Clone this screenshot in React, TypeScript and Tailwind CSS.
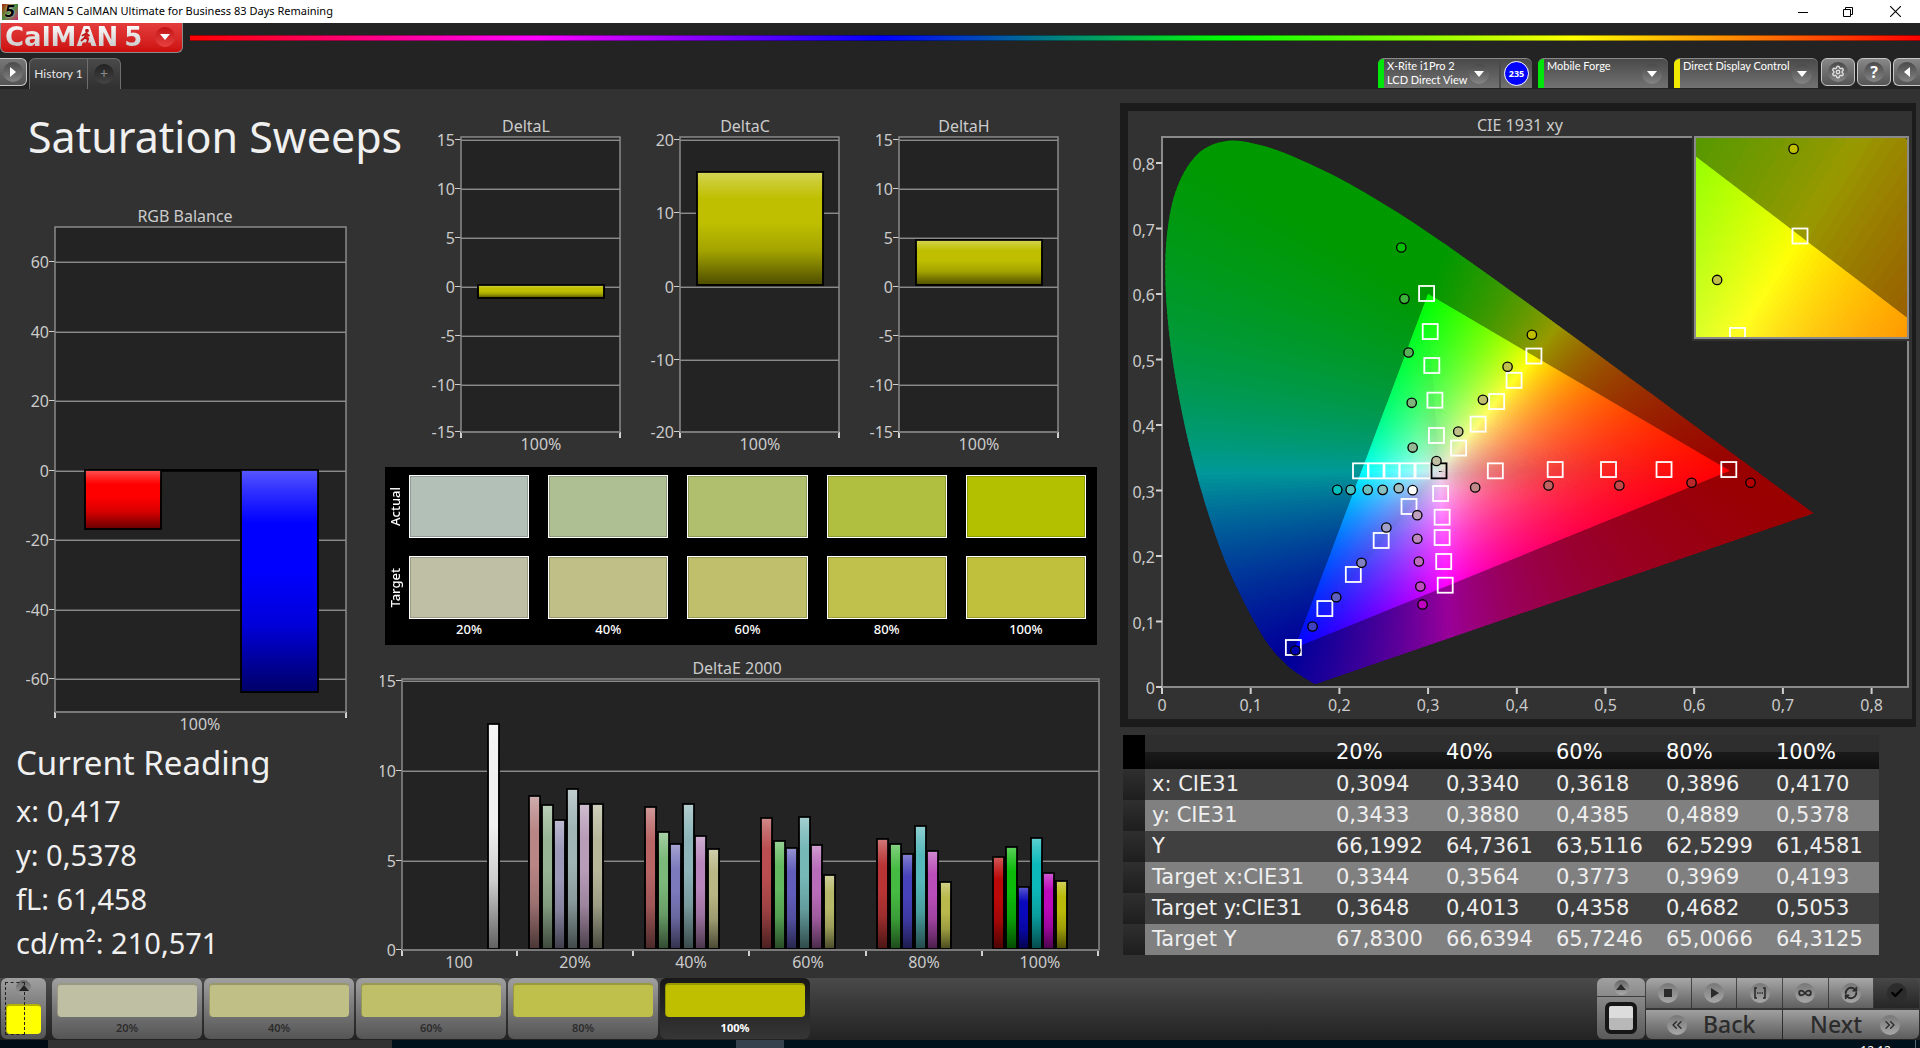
import type { ReactNode } from "react";
import { ChevronsLeft, ChevronsRight, Check, Infinity as Loop, RefreshCw, Settings } from "lucide-react";

type Point = [number, number];

type Bar = { x: number; w: number; top: number; bottom: number; color: string };
type Tick = { y: number; label: string };
type XLabel = { x: number; label: string };

type BarChartProps = {
  title: string;
  titleX: number;
  width: number;
  height: number;
  plot: { x: number; y: number; w: number; h: number };
  ticks: Tick[];
  xLabels: XLabel[];
  xTicks: number[];
  bars: Bar[];
};

function BarChart({ title, titleX, width, height, plot, ticks, xLabels, xTicks, bars }: BarChartProps) {
  const right = plot.x + plot.w;
  const bottom = plot.y + plot.h;

  return (
    <svg viewBox={`0 0 ${width} ${height}`} className="block w-full h-auto text-[16px]" fill="#cbcbcb">
      <defs>
        <linearGradient id="gloss" x1="0" y1="0" x2="0" y2="1">
          <stop offset="0" stopColor="#fff" stopOpacity="0.34" />
          <stop offset="0.1" stopColor="#fff" stopOpacity="0.18" />
          <stop offset="0.24" stopColor="#fff" stopOpacity="0" />
          <stop offset="0.45" stopColor="#000" stopOpacity="0" />
          <stop offset="0.7" stopColor="#000" stopOpacity="0.15" />
          <stop offset="1" stopColor="#000" stopOpacity="0.6" />
        </linearGradient>
      </defs>
      <text x={titleX} y={plot.y - 5} textAnchor="middle">
        {title}
      </text>
      <rect x={plot.x} y={plot.y} width={plot.w} height={plot.h} fill="#232323" />
      {ticks.map((t) => (
        <g key={t.label}>
          <rect x={plot.x} y={t.y - 1} width={plot.w} height="1" fill="#505050" />
          <rect x={plot.x} y={t.y} width={plot.w} height="1" fill="#8a8a8a" />
          <rect x={plot.x - 6} y={t.y - 1} width="6" height="1" fill="#d0d0d0" />
          <text x={plot.x - 6} y={t.y + 6} textAnchor="end">
            {t.label}
          </text>
        </g>
      ))}
      <rect x={plot.x} y={plot.y} width={plot.w} height={plot.h} fill="none" stroke="#8a8a8a" strokeWidth="1.5" />
      {bars.map((b) => (
        <g key={b.x} stroke="#000" strokeWidth="1.5">
          <rect x={b.x} y={b.top} width={b.w} height={b.bottom - b.top} fill={b.color} />
          <rect x={b.x} y={b.top} width={b.w} height={b.bottom - b.top} fill="url(#gloss)" />
        </g>
      ))}
      {xTicks.map((x) => (
        <rect key={x} x={x - 1} y={bottom} width="2" height="6" fill="#d0d0d0" />
      ))}
      <rect x={plot.x} y={bottom - 1} width={right - plot.x} height="2" fill="#7a7a7a" />
      {xLabels.map((l) => (
        <text key={l.label} x={l.x} y={bottom + 18} textAnchor="middle">
          {l.label}
        </text>
      ))}
    </svg>
  );
}

const deltaBar = (top: number, bottom: number): Bar[] => [{ x: 57, w: 126, top, bottom, color: "#bfbf00" }];
const fiveTicks: Tick[] = ["15", "10", "5", "0", "-5", "-10", "-15"].map((label, i) => ({ label, y: 31 + i * 49 - (i === 6 ? 2 : 0) }));
const tenTicks: Tick[] = ["20", "10", "0", "-10", "-20"].map((label, i) => ({ label, y: [31, 104, 178, 251, 323][i] }));

const deltaCharts = [
  { title: "DeltaL", ticks: fiveTicks, bars: deltaBar(176, 189) },
  { title: "DeltaC", ticks: tenTicks, bars: deltaBar(63, 176) },
  { title: "DeltaH", ticks: fiveTicks, bars: deltaBar(131, 176) },
];

const sweepGroups: { start: number; bars: [number, string][] }[] = [
  { start: 149, bars: [[143, "#b98585"], [152, "#97b594"], [167, "#9c99b9"], [136, "#a1b5b7"], [151, "#b89cb8"], [151, "#b6b79a"]] },
  { start: 265, bars: [[154, "#b96565"], [179, "#7bb879"], [191, "#7c79bc"], [151, "#8db5b9"], [183, "#b886bc"], [196, "#b8b684"]] },
  { start: 381, bars: [[165, "#b94d4f"], [188, "#62b960"], [195, "#605dbb"], [164, "#76b8b8"], [192, "#b96cb9"], [222, "#b8b86a"]] },
  { start: 497, bars: [[186, "#b93535"], [191, "#46bb42"], [201, "#4642bb"], [173, "#56b8ba"], [198, "#b94db9"], [229, "#b8b84c"]] },
  { start: 613, bars: [[204, "#bb0808"], [194, "#0cba0a"], [234, "#0a08bb"], [185, "#0cb8ba"], [220, "#ba08ba"], [228, "#b9b90a"]] },
];

const sweepBars: Bar[] = [
  { x: 108, w: 11, top: 71, bottom: 296, color: "#f0f0f0" },
  ...sweepGroups.flatMap((g) =>
    g.bars.map(([top, color], i) => ({ x: g.start + Math.round(i * 12.6), w: 11, top, bottom: 296, color })),
  ),
];

/* ---------- CIE 1931 diagram ---------- */

const RED: Point = [0.64, 0.33];
const GREEN: Point = [0.3, 0.6];
const BLUE: Point = [0.15, 0.06];
const WHITE: Point = [0.3127, 0.329];

const locus: Point[] = [
  [0.1741, 0.005], [0.1714, 0.0051], [0.1689, 0.0069], [0.1644, 0.0109], [0.1566, 0.0177], [0.144, 0.0297],
  [0.1241, 0.0578], [0.1096, 0.0868], [0.0913, 0.1327], [0.0687, 0.2007], [0.0454, 0.295], [0.0235, 0.4127],
  [0.0082, 0.5384], [0.0039, 0.6548], [0.0139, 0.7502], [0.0389, 0.812], [0.0743, 0.8338], [0.1142, 0.8262],
  [0.1547, 0.8059], [0.1929, 0.7816], [0.2296, 0.7543], [0.2658, 0.7243], [0.3016, 0.6923], [0.3373, 0.6589],
  [0.3731, 0.6245], [0.4087, 0.5896], [0.4441, 0.5547], [0.4788, 0.5202], [0.5125, 0.4866], [0.5448, 0.4544],
  [0.5752, 0.4242], [0.6029, 0.3965], [0.627, 0.3725], [0.6658, 0.334], [0.6915, 0.3083], [0.719, 0.2809],
  [0.7347, 0.2653],
];

// diagram units: xy * 1000 with y pointing up
const unit = ([x, y]: Point): Point => [x * 1000, -y * 1000];
const pts = (list: Point[]) => list.map((p) => unit(p).map((n) => n.toFixed(2)).join(",")).join(" ");
const mix = (a: Point, b: Point, t: number): Point => [a[0] + (b[0] - a[0]) * t, a[1] + (b[1] - a[1]) * t];

function xyColor([x, y]: Point, level = 1) {
  const X = x / y;
  const Z = (1 - x - y) / y;
  const rgb = [
    3.2406 * X - 1.5372 - 0.4986 * Z,
    -0.9689 * X + 1.8758 + 0.0415 * Z,
    0.0557 * X - 0.204 + 1.057 * Z,
  ].map((c) => Math.max(0, c));
  const max = Math.max(...rgb);
  return `rgb(${rgb.map((c) => Math.round((c / max) * 255 * level)).join(",")})`;
}

// smooth outline through the locus points
const locusPath = (() => {
  const p = locus.map(unit);
  let d = `M${p[0]}`;
  for (let i = 0; i < p.length - 1; i++) {
    const a = p[Math.max(0, i - 1)];
    const b = p[i];
    const c = p[i + 1];
    const e = p[Math.min(p.length - 1, i + 2)];
    d += `C${b[0] + (c[0] - a[0]) / 6},${b[1] + (c[1] - a[1]) / 6} ${c[0] - (e[0] - b[0]) / 6},${c[1] - (e[1] - b[1]) / 6} ${c[0]},${c[1]}`;
  }
  return d + "Z";
})();

const OUTER_STEPS = 120;
const outerFans = (
  [
    [RED, GREEN, BLUE],
    [BLUE, GREEN, RED],
    [GREEN, RED, BLUE],
  ] as Point[][]
).flatMap(([apex, from, to]) =>
  Array.from({ length: OUTER_STEPS }, (_, i) => {
    const a = mix(from, to, i / OUTER_STEPS);
    const b = mix(from, to, Math.min(1, (i + 1.5) / OUTER_STEPS));
    return {
      points: pts([a, b, mix(apex, b, 5), mix(apex, a, 5)]),
      fill: xyColor(mix(from, to, (i + 0.5) / OUTER_STEPS), 0.6),
    };
  }),
);

const corners = [
  { points: pts([GREEN, mix(RED, GREEN, 4), mix(BLUE, GREEN, 4)]), fill: "#009900" },
  { points: pts([BLUE, mix(RED, BLUE, 4), mix(GREEN, BLUE, 4)]), fill: "#000099" },
  { points: pts([RED, mix(GREEN, RED, 4), mix(BLUE, RED, 4)]), fill: "#990000" },
];

const INNER_STEPS = 220;
const STOPS = [0, 0.08, 0.16, 0.28, 0.42, 0.6, 0.8, 1];
const innerFan = (
  [
    [RED, GREEN],
    [GREEN, BLUE],
    [BLUE, RED],
  ] as Point[][]
).flatMap(([from, to], edge) =>
  Array.from({ length: INNER_STEPS }, (_, i) => {
    const a = mix(from, to, i / INNER_STEPS);
    const b = mix(from, to, (i + 2) / INNER_STEPS);
    const mid = mix(from, to, (i + 0.5) / INNER_STEPS);
    return { id: `ray-${edge}-${i}`, points: pts([WHITE, mix(WHITE, a, 1.1), mix(WHITE, b, 1.1)]), mid };
  }),
);

// The gradient vector is the normal of the triangle edge, so that every wedge
// reaches its full colour exactly on that edge.
function rayVector(edge: number): [Point, Point] {
  const [from, to] = [[RED, GREEN], [GREEN, BLUE], [BLUE, RED]][edge].map(unit);
  const w = unit(WHITE);
  const dx = to[0] - from[0];
  const dy = to[1] - from[1];
  const t = ((w[0] - from[0]) * dx + (w[1] - from[1]) * dy) / (dx * dx + dy * dy);
  return [w, [from[0] + dx * t, from[1] + dy * t]];
}

const actual: [number, number, string][] = [
  [0.2698, 0.671, "#00c000"], [0.2733, 0.5926, "#3cb43c"], [0.278, 0.5107, "#58b058"], [0.2815, 0.4339, "#7cb47c"], [0.2826, 0.3656, "#94b894"],
  [0.417, 0.5378, "#bfbf00"], [0.3896, 0.4889, "#bfbf4c"], [0.3618, 0.4385, "#bfbf6c"], [0.334, 0.39, "#bfbf88"], [0.3094, 0.345, "#bfbfa4"],
  [0.3531, 0.3046, "#c08888"], [0.4358, 0.3076, "#c06060"], [0.5156, 0.3076, "#c04848"], [0.597, 0.3118, "#b82828"], [0.6635, 0.3118, "#b40000"],
  [0.1976, 0.301, "#00bfbf"], [0.2127, 0.301, "#4cbfbf"], [0.2319, 0.301, "#6cbfbf"], [0.2488, 0.301, "#88bfbf"], [0.2669, 0.3035, "#a4bfbf"],
  [0.2529, 0.2435, "#a0a0c8"], [0.2249, 0.1896, "#8080c0"], [0.1964, 0.1371, "#6060c0"], [0.1697, 0.0924, "#4040c0"], [0.1504, 0.0557, "#0000b0"],
  [0.2878, 0.2623, "#bfa0bf"], [0.2878, 0.2263, "#bf88bf"], [0.2896, 0.1916, "#bf6cbf"], [0.2913, 0.1534, "#bf4cbf"], [0.2937, 0.126, "#bf00bf"],
  [0.2826, 0.3005, "#ffffff"],
];

const targets: Point[] = [
  [0.2983, 0.6008], [0.3024, 0.5427], [0.3042, 0.4908], [0.3077, 0.4379], [0.3094, 0.384],
  [0.3344, 0.3648], [0.3564, 0.4013], [0.3773, 0.4358], [0.3969, 0.4682], [0.4193, 0.5053],
  [0.3758, 0.33], [0.4433, 0.332], [0.5034, 0.332], [0.566, 0.332], [0.639, 0.332],
  [0.2238, 0.33], [0.2413, 0.33], [0.2593, 0.33], [0.2762, 0.33], [0.2943, 0.33],
  [0.3141, 0.2954], [0.3158, 0.2592], [0.3158, 0.2282], [0.3176, 0.1916], [0.3193, 0.1554],
  [0.2785, 0.2756], [0.2471, 0.2237], [0.2157, 0.1718], [0.1836, 0.1198], [0.1481, 0.0603],
];

function Gamut() {
  return (
    <g id="gamut">
      <g clipPath="url(#locus)">
        {corners.map((c) => (
          <polygon key={c.fill} points={c.points} fill={c.fill} stroke={c.fill} strokeWidth="6" />
        ))}
        {outerFans.map((f, i) => (
          <polygon key={i} points={f.points} fill={f.fill} />
        ))}
      </g>
      <g clipPath="url(#triangle)">
        {innerFan.map((f) => (
          <polygon key={f.id} points={f.points} fill={`url(#${f.id})`} />
        ))}
      </g>
    </g>
  );
}

function Markers({ px, py }: { px: (x: number) => number; py: (y: number) => number }) {
  return (
    <g fill="none" strokeWidth="1.8">
      {targets.map(([x, y]) => (
        <rect key={`${x}-${y}`} x={px(x) - 7.5} y={py(y) - 7.5} width="15" height="15" stroke="#fff" />
      ))}
      <rect x={px(0.3123) - 7.5} y={py(0.33) - 7.5} width="15" height="15" stroke="#000" />
      {actual.map(([x, y, fill]) => (
        <circle key={`${x}-${y}`} cx={px(x)} cy={py(y)} r="4.7" fill={fill} stroke="#000" strokeWidth="1.3" />
      ))}
    </g>
  );
}

function CieChart() {
  const px = (x: number) => 34 + x * 887;
  const py = (y: number) => 576 - y * 655;
  const ix = (x: number) => 672 + (x - 0.4193) * 2790;
  const iy = (y: number) => 125 - (y - 0.5053) * 2680;
  const marks = ["0", "0,1", "0,2", "0,3", "0,4", "0,5", "0,6", "0,7", "0,8"];

  return (
    <svg viewBox="0 0 784 608" className="block w-full h-auto text-[16px]" fill="#cbcbcb">
      <defs>
        <clipPath id="locus">
          <path d={locusPath} />
        </clipPath>
        <clipPath id="triangle">
          <polygon points={pts([RED, GREEN, BLUE])} />
        </clipPath>
        <clipPath id="inset">
          <rect x="567" y="26" width="213" height="201" />
        </clipPath>
        {innerFan.map((f) => {
          const [[x1, y1], [x2, y2]] = rayVector(Number(f.id.split("-")[1]));
          return (
            <linearGradient key={f.id} id={f.id} gradientUnits="userSpaceOnUse" x1={x1} y1={y1} x2={x2} y2={y2}>
              {STOPS.map((t) => (
                <stop key={t} offset={t} stopColor={xyColor(mix(WHITE, f.mid, t))} />
              ))}
            </linearGradient>
          );
        })}
      </defs>
      <text x="392" y="20" textAnchor="middle">
        CIE 1931 xy
      </text>
      <rect x="34" y="26" width="746" height="550" fill="#232323" stroke="#8a8a8a" strokeWidth="2" />
      {marks.map((m, i) => (
        <g key={m}>
          <rect x={28} y={py(i / 10) - 1} width="6" height="2" fill="#d0d0d0" />
          <text x="27" y={py(i / 10) + 7} textAnchor="end">
            {m}
          </text>
          <rect x={px(i / 10) - 1} y="577" width="2" height="6" fill="#d0d0d0" />
          <text x={px(i / 10)} y="600" textAnchor="middle">
            {m}
          </text>
        </g>
      ))}
      <g transform="translate(34 576) scale(0.887 0.655)">
        <Gamut />
      </g>
      <Markers px={px} py={py} />
      <rect x="564" y="22" width="220" height="208" fill="#323232" />
      <g clipPath="url(#inset)">
        <g transform={`translate(${ix(0)} ${iy(0)}) scale(2.79 2.68)`}>
          <use href="#gamut" />
        </g>
        <Markers px={ix} py={iy} />
      </g>
      <rect x="567" y="26" width="213" height="201" fill="none" stroke="#8a8a8a" strokeWidth="2" />
    </svg>
  );
}

/* ---------- data table ---------- */

const levels = ["20%", "40%", "60%", "80%", "100%"];

const readings = [
  { label: "x: CIE31", values: ["0,3094", "0,3340", "0,3618", "0,3896", "0,4170"] },
  { label: "y: CIE31", values: ["0,3433", "0,3880", "0,4385", "0,4889", "0,5378"] },
  { label: "Y", values: ["66,1992", "64,7361", "63,5116", "62,5299", "61,4581"] },
  { label: "Target x:CIE31", values: ["0,3344", "0,3564", "0,3773", "0,3969", "0,4193"] },
  { label: "Target y:CIE31", values: ["0,3648", "0,4013", "0,4358", "0,4682", "0,5053"] },
  { label: "Target Y", values: ["67,8300", "66,6394", "65,7246", "65,0066", "64,3125"] },
];

function ReadingsTable() {
  return (
    <table className="w-full table-fixed border-collapse text-left font-['DejaVu_Sans',sans-serif] text-[21px] leading-[31px] text-[#efefef]">
      <colgroup>
        <col className="w-[22px]" />
        <col className="w-[184px]" />
        <col span={5} />
      </colgroup>
      <thead>
        <tr className="h-[34px] bg-linear-to-b from-[#2e2e2e] from-50% via-[#1a1a1a] via-50% to-[#101010]">
          <td className="bg-black" />
          <td />
          {levels.map((l) => (
            <th key={l} scope="col" className="p-0 pl-[7px] font-normal text-white">
              {l}
            </th>
          ))}
        </tr>
      </thead>
      <tbody>
        {readings.map((r) => (
          <tr key={r.label} className="h-[31px] bg-[#404040] even:bg-[#808080]">
            <td className="bg-linear-to-b from-[#2f2f2f] to-[#1e1e1e]" />
            <th scope="row" className="p-0 pl-[7px] font-normal whitespace-nowrap">
              {r.label}
            </th>
            {r.values.map((v) => (
              <td key={v} className="p-0 pl-[7px]">
                {v}
              </td>
            ))}
          </tr>
        ))}
      </tbody>
    </table>
  );
}

/* ---------- swatches ---------- */

const actualSwatches = ["bg-[#b2c0b7]", "bg-[#afbf94]", "bg-[#b0bf6e]", "bg-[#b0bf40]", "bg-[#b2c000]"];
const targetSwatches = ["bg-[#bfbfa6]", "bg-[#c0bf88]", "bg-[#bfbf6c]", "bg-[#c0c04c]", "bg-[#c1c03d]"];

function SwatchRow({ label, colors }: { label: string; colors: string[] }) {
  return (
    <div className="flex">
      <div className="mr-1 flex w-5 items-center justify-center">
        <span className="rotate-180 text-[13px] leading-5 font-medium [writing-mode:vertical-rl]">{label}</span>
      </div>
      <div className="grid flex-1 grid-cols-5 gap-[19px]">
        {colors.map((c) => (
          <div key={c} className={`h-[63px] border border-white shadow-[inset_0_0_0_1px_#00000030] ${c}`} />
        ))}
      </div>
    </div>
  );
}

function SwatchPanel() {
  return (
    <div className="mt-2 mr-[23px] ml-[5px] flex h-[178px] flex-col bg-black pt-2 pr-[11px] text-white">
      <SwatchRow label="Actual" colors={actualSwatches} />
      <div className="mt-[18px]">
        <SwatchRow label="Target" colors={targetSwatches} />
      </div>
      <div className="ml-6 grid grid-cols-5 gap-[19px] text-center text-[13px] leading-5 font-medium">
        {levels.map((l) => (
          <span key={l}>{l}</span>
        ))}
      </div>
    </div>
  );
}

/* ---------- chrome ---------- */

function Knob({ children, className = "" }: { children: ReactNode; className?: string }) {
  return (
    <span className={`flex size-5 shrink-0 items-center justify-center rounded-full bg-linear-to-b from-[#4a4a4a] to-[#858585] text-white ${className}`}>
      {children}
    </span>
  );
}

function Triangle({ className = "" }: { className?: string }) {
  return (
    <svg viewBox="0 0 10 6" className={`h-[6px] w-[10px] ${className}`} fill="currentColor">
      <path d="M0 0h10L5 6z" />
    </svg>
  );
}

function DeviceTab({ lines, strip, width, children }: { lines: string[]; strip: string; width: string; children?: ReactNode }) {
  return (
    <div className={`flex h-[30px] overflow-hidden rounded-t-md border-t border-[#8a8a8a] bg-linear-to-b from-[#4a4a4a] to-[#727272] ${width}`}>
      <span className={`w-[6px] shrink-0 ${strip}`} />
      <button type="button" className="flex min-w-0 flex-1 items-center justify-between pr-[6px] pl-[3px]">
        <span className="self-start text-left font-['Lato','Noto_Sans',sans-serif] text-[11px] leading-[14px] whitespace-nowrap text-white">
          {lines.map((l) => (
            <span key={l} className="block">
              {l}
            </span>
          ))}
        </span>
        <Knob>
          <Triangle />
        </Knob>
      </button>
      {children}
    </div>
  );
}

function TitleBar() {
  return (
    <div className="flex h-[23px] items-center bg-white text-black">
      <span className="ml-[2px] flex size-4 items-center justify-center bg-linear-to-br from-[#a02010] via-[#3f8a3a] to-[#c01870]">
        <span className="font-['DejaVu_Sans',sans-serif] text-[15px] leading-4 font-bold text-black italic [text-shadow:0_0_2px_#fff]">5</span>
      </span>
      <span className="ml-[5px] text-[11px]">CalMAN 5 CalMAN Ultimate for Business 83 Days Remaining</span>
      <div className="ml-auto flex">
        <button type="button" aria-label="Minimize" className="flex h-[22px] w-[45px] items-center justify-center">
          <svg viewBox="0 0 10 10" className="size-[10px]" stroke="#000">
            <path d="M0 5.5h10" />
          </svg>
        </button>
        <button type="button" aria-label="Restore" className="flex h-[22px] w-[46px] items-center justify-center">
          <svg viewBox="0 0 10 10" className="size-[10px]" stroke="#000" fill="none">
            <path d="M.5 2.5h7v7h-7zM2.5 2.5v-2h7v7h-2" />
          </svg>
        </button>
        <button type="button" aria-label="Close" className="flex h-[22px] w-[49px] items-center justify-center">
          <svg viewBox="0 0 10 10" className="size-[11px]" stroke="#000">
            <path d="M0 0l10 10M10 0L0 10" />
          </svg>
        </button>
      </div>
    </div>
  );
}

function Header() {
  return (
    <header className="flex h-[66px] flex-col justify-between bg-[#232323]">
      <div className="flex">
        <button
          type="button"
          className="relative flex h-[30px] w-[183px] shrink-0 items-start rounded-b-md border border-t-0 border-[#8b8b8b] bg-linear-to-b from-[#e43c3c] to-[#cc0c0c] pt-px pl-1 font-['DejaVu_Sans',sans-serif] text-[26px] leading-[26px] font-bold"
        >
          <span className="bg-linear-to-b from-white to-[#c4c4c4] bg-clip-text text-transparent">CalMAN</span>
          <span className="ml-[6px] bg-linear-to-b from-white to-[#c4c4c4] bg-clip-text text-transparent">5</span>
          {/* runner in the A */}
          <svg viewBox="0 0 12 14" className="absolute top-[6px] left-[79px] h-[14px] w-3" fill="none" stroke="#c01818" strokeWidth="1.8" strokeLinecap="round">
            <circle cx="7" cy="1.8" r="1" fill="#c01818" />
            <path d="M6 4.5L5 8.5l3 2-1 3M5 8.5L1.5 11.5M2.5 6.5L6 4.5l3 2" />
          </svg>
          <span className="mt-[3px] ml-[13px] flex size-5 items-center justify-center rounded-full bg-linear-to-b from-[#c01010] to-[#e84040] text-white">
            <Triangle />
          </span>
        </button>
        <div className="mt-3 ml-[7px] h-[6px] flex-1 bg-[linear-gradient(to_right,#f00,#f0f_20%,#00f_40%,#0f0_60%,#ff0_80%,#f00)] shadow-[inset_0_1px_#00000066,inset_0_-1px_#00000066]" />
      </div>
      <div className="flex items-start">
        <button type="button" aria-label="Show panel" className="flex h-7 w-[27px] items-center justify-center rounded-r-md border border-l-0 border-[#c8c8c8] bg-linear-to-b from-[#777] to-[#555]">
          <Knob>
            <Triangle className="-rotate-90" />
          </Knob>
        </button>
        <nav className="ml-[2px] flex h-[31px] rounded-t-md border border-b-0 border-[#6e6e6e] bg-linear-to-b from-[#4a4a4a] to-[#303030]">
          <button type="button" className="w-[58px] border-r border-[#6e6e6e] text-center text-[12px] font-['Lato','Noto_Sans',sans-serif] text-[#e6e6e6]">
            History 1
          </button>
          <button type="button" aria-label="Add tab" className="flex w-8 items-center justify-center">
            <span className="flex size-5 items-center justify-center rounded-full bg-linear-to-b from-[#222] to-[#444] text-[14px] leading-5 text-[#8a8a8a]">+</span>
          </button>
        </nav>
        <div className="ml-auto flex gap-[6px]">
          <DeviceTab lines={["X-Rite i1Pro 2", "LCD Direct View"]} strip="bg-[#00e60b]" width="w-[154px]">
            <span className="ml-1 flex w-[33px] shrink-0 items-center justify-center border-l-2 border-[#4a4a4a]">
              <span className="flex size-[25px] items-center justify-center rounded-full border border-white bg-[#0000ff] text-[9px] font-bold text-white">235</span>
            </span>
          </DeviceTab>
          <DeviceTab lines={["Mobile Forge"]} strip="bg-[#00e60b]" width="w-[130px]" />
          <DeviceTab lines={["Direct Display Control"]} strip="bg-[#f0e800]" width="w-[144px]" />
        </div>
        <div className="ml-[3px] flex gap-[2px]">
          <button type="button" aria-label="Settings" className="flex h-7 w-[34px] items-center justify-center rounded-md border border-[#c8c8c8] bg-linear-to-b from-[#888] to-[#555]">
            <Knob>
              <Settings className="size-[14px] text-[#ddd]" strokeWidth={2.5} />
            </Knob>
          </button>
          <button type="button" aria-label="Help" className="flex h-7 w-[34px] items-center justify-center rounded-md border border-[#c8c8c8] bg-linear-to-b from-[#888] to-[#555]">
            <Knob className="text-[16px] font-bold">?</Knob>
          </button>
          <button type="button" aria-label="Collapse" className="flex h-7 w-[27px] items-center justify-center rounded-l-md border border-r-0 border-[#c8c8c8] bg-linear-to-b from-[#888] to-[#555]">
            <Knob>
              <Triangle className="rotate-90" />
            </Knob>
          </button>
        </div>
      </div>
    </header>
  );
}

const patterns = [
  { label: "20%", color: "bg-[#bfbfa4]" },
  { label: "40%", color: "bg-[#bfbf86]" },
  { label: "60%", color: "bg-[#bfbf6a]" },
  { label: "80%", color: "bg-[#bfbf4b]" },
  { label: "100%", color: "bg-[#bfbf00]", active: true },
];

const iconButtons = [
  { label: "Stop", icon: <rect x="3" y="3" width="8" height="8" fill="#2b2b2b" /> },
  { label: "Play", icon: <path d="M4 2l8 5-8 5z" fill="#2b2b2b" /> },
  {
    label: "Series",
    icon: (
      <g fill="none" stroke="#2b2b2b" strokeWidth="1.6">
        <path d="M4 2H2v10h2M10 2h2v10h-2" />
        <path d="M4 7h1.4M6.3 7h1.4M8.6 7H10" />
      </g>
    ),
  },
  { label: "Continuous", icon: <Loop width={14} height={14} color="#2b2b2b" strokeWidth={3} /> },
  { label: "Refresh", icon: <RefreshCw width={14} height={14} color="#2b2b2b" strokeWidth={3.2} /> },
];

function BottomBar() {
  return (
    <footer className="flex h-[62px] items-start bg-linear-to-b from-[#4a4a4a] to-[#232323] pl-px">
      <button type="button" aria-label="Pattern window" className="relative flex h-[61px] w-[45px] flex-col items-center justify-between rounded-md bg-linear-to-b from-[#a0a0a0] to-[#555] pt-[2px] pb-[5px]">
        <span className="flex size-[15px] items-center justify-center rounded-full bg-linear-to-b from-[#666] to-[#999] text-[#222]">
          <Triangle className="rotate-180" />
        </span>
        <span className="h-[30px] w-[35px] rounded-sm border-t-2 border-l border-[#b4b400] bg-[#ffff00]" />
        <span className="absolute top-1 left-1 h-[53px] w-5 border border-dashed border-[#222]" />
      </button>
      <div className="ml-[6px] flex gap-[2px]">
        {patterns.map((p) => (
          <button
            key={p.label}
            type="button"
            className={`flex h-[61px] w-[150px] flex-col rounded-md bg-linear-to-b px-[5px] pt-[5px] text-[11px] leading-[22px] ${
              p.active ? "from-[#181818] to-[#363636] font-bold text-white" : "from-[#a0a0a0] to-[#555] font-semibold text-[#2c2c2c]"
            }`}
          >
            <span className={`h-9 w-full rounded-sm border-t-2 border-l border-black/20 ${p.color}`} />
            <span className="w-full text-center">{p.label}</span>
          </button>
        ))}
      </div>
      <div className="ml-auto flex gap-px pr-px">
        <div className="flex w-12 flex-col gap-px">
          <button type="button" aria-label="Expand" className="flex h-[18px] items-center justify-center rounded-t-md bg-linear-to-b from-[#a0a0a0] to-[#8a8a8a]">
            <span className="flex size-[15px] items-center justify-center rounded-full bg-linear-to-b from-[#666] to-[#aaa] text-[#2b2b2b]">
              <Triangle className="rotate-180" />
            </span>
          </button>
          <button type="button" aria-label="Window size" className="flex h-[42px] items-center justify-center rounded-b-md bg-linear-to-b from-[#888] to-[#5a5a5a]">
            <span className="size-8 rounded-md border-[4px] border-[#161616] bg-linear-to-b from-[#dcdcdc] from-50% to-[#b8b8b8] to-50%" />
          </button>
        </div>
        <div className="flex w-[273px] flex-col gap-[2px]">
          <div className="grid grid-cols-6 gap-px">
            {iconButtons.map((b) => (
              <button key={b.label} type="button" aria-label={b.label} className="flex h-[30px] items-center justify-center bg-linear-to-b from-[#a8a8a8] to-[#606060] first:rounded-tl-md">
                <span className="flex size-5 items-center justify-center rounded-full bg-linear-to-b from-[#777] to-[#a8a8a8]">
                  <svg viewBox="0 0 14 14" className="size-[14px]">
                    {b.icon}
                  </svg>
                </span>
              </button>
            ))}
            <button type="button" aria-label="Accept" className="flex h-[30px] items-center justify-center rounded-tr-md bg-linear-to-b from-[#484848] to-[#262626]">
              <span className="flex size-5 items-center justify-center rounded-full bg-[#2c2c2c]">
                <Check className="size-[14px] text-black" strokeWidth={4} />
              </span>
            </button>
          </div>
          <div className="grid grid-cols-2 gap-px text-[23px] leading-[29px] font-medium text-[#2b2b2b]">
            <button type="button" className="flex h-[29px] items-center rounded-bl-md bg-linear-to-b from-[#a0a0a0] to-[#5c5c5c] pl-[21px]">
              <span className="mr-4 flex size-5 items-center justify-center rounded-full bg-linear-to-b from-[#777] to-[#a8a8a8]">
                <ChevronsLeft className="size-4" />
              </span>
              Back
            </button>
            <button type="button" className="flex h-[29px] items-center justify-end rounded-br-md bg-linear-to-b from-[#a0a0a0] to-[#5c5c5c] pr-[19px]">
              Next
              <span className="ml-[18px] flex size-5 items-center justify-center rounded-full bg-linear-to-b from-[#777] to-[#a8a8a8]">
                <ChevronsRight className="size-4" />
              </span>
            </button>
          </div>
        </div>
      </div>
    </footer>
  );
}

function Taskbar() {
  return (
    <div className="flex h-2 overflow-hidden bg-[#00111b] text-white">
      <span className="w-12 bg-[#000b15]" />
      <span className="w-[344px] bg-[#313131]" />
      <span className="w-[344px]" />
      <span className="w-12 bg-[#35414d]" />
      <span className="mt-[3px] mr-6 ml-auto text-[12px] leading-4">12:12</span>
      <span className="mr-1 w-px bg-[#5c6a72]" />
    </div>
  );
}

export default function App() {
  return (
    <div className="flex min-h-screen flex-col bg-[#323232] font-['Noto_Sans',sans-serif] text-[#f0f0f0]">
      <TitleBar />
      <Header />
      <main className="grid flex-1 grid-cols-[minmax(0,380fr)_minmax(0,740fr)_minmax(0,800fr)]">
        <section className="pt-5">
          <h1 className="pl-7 text-[43px] leading-[56px] whitespace-nowrap">Saturation Sweeps</h1>
          <div className="mt-9">
            <BarChart
              title="RGB Balance"
              titleX={185}
              width={380}
              height={540}
              plot={{ x: 55, y: 26, w: 291, h: 485 }}
              ticks={["60", "40", "20", "0", "-20", "-40", "-60"].map((label, i) => ({ label, y: Math.round(61 + i * 69.5) }))}
              xLabels={[{ x: 200, label: "100%" }]}
              xTicks={[55, 346]}
              bars={[
                { x: 85, w: 76, top: 269, bottom: 328, color: "#ff0000" },
                { x: 162, w: 78, top: 269, bottom: 270, color: "#000" },
                { x: 241, w: 77, top: 269, bottom: 491, color: "#0000ff" },
              ]}
            />
          </div>
          <h2 className="pl-4 text-[33px] leading-[44px]">Current Reading</h2>
          <ul className="mt-1 pl-4 text-[29px] leading-[44px]">
            <li>x: 0,417</li>
            <li>y: 0,5378</li>
            <li>fL: 61,458</li>
            <li>cd/m²: 210,571</li>
          </ul>
        </section>

        <section className="pt-5">
          <div className="grid grid-cols-3 pr-[42px] pl-[41px]">
            {deltaCharts.map((c) => (
              <BarChart
                key={c.title}
                title={c.title}
                titleX={105}
                width={219}
                height={350}
                plot={{ x: 40, y: 28, w: 159, h: 295 }}
                ticks={c.ticks}
                xLabels={[{ x: 120, label: "100%" }]}
                xTicks={[40, 199]}
                bars={c.bars}
              />
            ))}
          </div>
          <SwatchPanel />
          <div className="mt-2">
            <BarChart
              title="DeltaE 2000"
              titleX={357}
              width={740}
              height={320}
              plot={{ x: 22, y: 26, w: 697, h: 271 }}
              ticks={[
                { y: 28, label: "15" },
                { y: 118, label: "10" },
                { y: 208, label: "5" },
                { y: 297, label: "0" },
              ]}
              xLabels={["100", ...levels].map((label, i) => ({ label, x: Math.round(79 + i * 116.2) }))}
              xTicks={[22, 137, 253, 369, 486, 602, 718]}
              bars={sweepBars}
            />
          </div>
        </section>

        <section className="pt-[14px] pr-1">
          <div className="border-8 border-r-4 border-[#1b1b1b]">
            <CieChart />
          </div>
          <div className="mt-2 mr-[37px] ml-[3px]">
            <ReadingsTable />
          </div>
        </section>
      </main>
      <BottomBar />
      <Taskbar />
    </div>
  );
}
